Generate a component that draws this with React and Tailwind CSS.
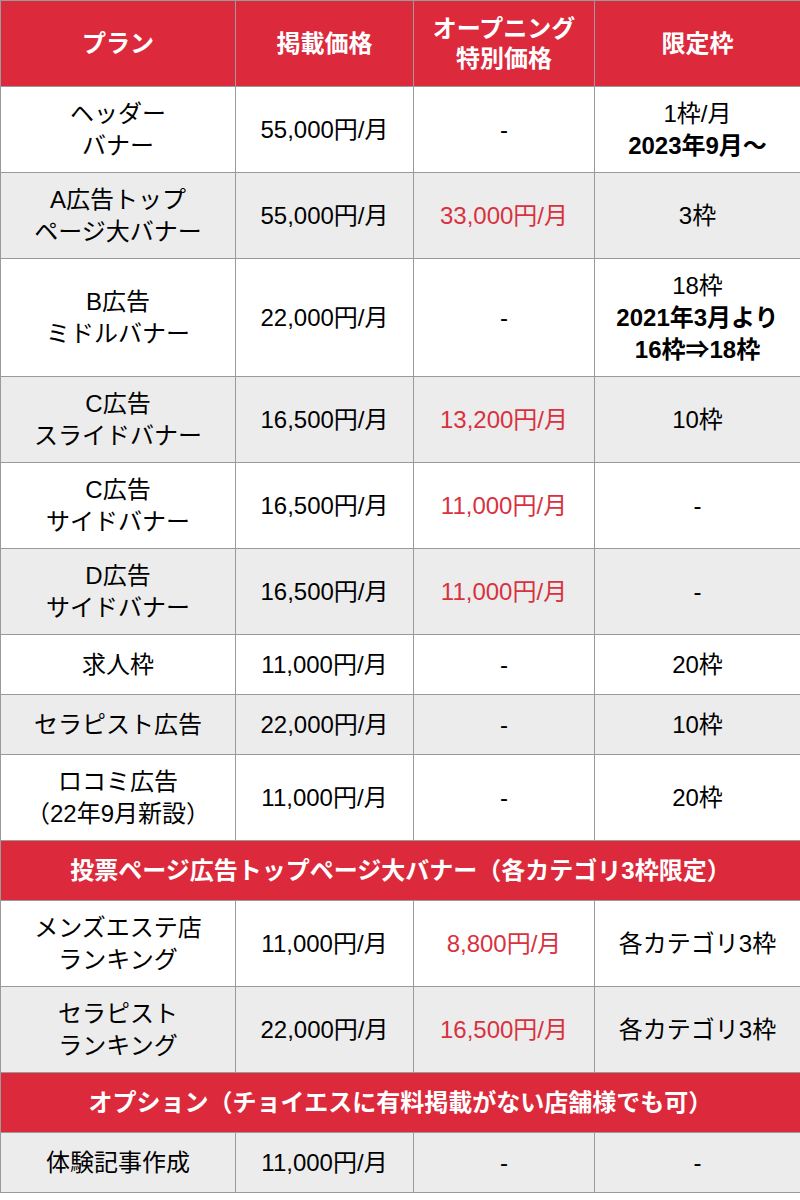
import React from 'react'

const rows = [
  { plan: ['ヘッダー', 'バナー'], price: '55,000円/月', open: '-', limit: [['1枠/月', false], ['2023年9月〜', true]] },
  { plan: ['A広告トップ', 'ページ大バナー'], price: '55,000円/月', open: '33,000円/月', limit: [['3枠', false]] },
  { plan: ['B広告', 'ミドルバナー'], price: '22,000円/月', open: '-', limit: [['18枠', false], ['2021年3月より', true], ['16枠⇒18枠', true]] },
  { plan: ['C広告', 'スライドバナー'], price: '16,500円/月', open: '13,200円/月', limit: [['10枠', false]] },
  { plan: ['C広告', 'サイドバナー'], price: '16,500円/月', open: '11,000円/月', limit: [['-', false]] },
  { plan: ['D広告', 'サイドバナー'], price: '16,500円/月', open: '11,000円/月', limit: [['-', false]] },
  { plan: ['求人枠'], price: '11,000円/月', open: '-', limit: [['20枠', false]] },
  { plan: ['セラピスト広告'], price: '22,000円/月', open: '-', limit: [['10枠', false]] },
  { plan: ['ロコミ広告', '（22年9月新設）'], price: '11,000円/月', open: '-', limit: [['20枠', false]] },
]

const vote = [
  { plan: ['メンズエステ店', 'ランキング'], price: '11,000円/月', open: '8,800円/月', limit: [['各カテゴリ3枠', false]] },
  { plan: ['セラピスト', 'ランキング'], price: '22,000円/月', open: '16,500円/月', limit: [['各カテゴリ3枠', false]] },
]

const options = [
  { plan: ['体験記事作成'], price: '11,000円/月', open: '-', limit: [['-', false]] },
]

const cell = 'border border-[#9a9a9a] text-center align-middle px-1 py-[10.5px] leading-[32px] h-[60px]'

const Row = ({ r, gray }) => (
  <tr className={gray ? 'bg-[#ececec]' : 'bg-white'}>
    <td className={cell}>
      {r.plan.map((l, i) => <div key={i}>{l}</div>)}
    </td>
    <td className={cell}>{r.price}</td>
    <td className={`${cell} ${r.open !== '-' ? 'text-[#d8323f]' : ''}`}>{r.open}</td>
    <td className={cell}>
      {r.limit.map(([l, b], i) => <div key={i} className={b ? 'font-bold' : ''}>{l}</div>)}
    </td>
  </tr>
)

const Section = ({ children }) => (
  <tr className="bg-[#dc2a3c]">
    <td colSpan={4} className="border border-[#9a9a9a] text-center text-white font-bold h-[60px] leading-[32px] whitespace-nowrap">
      {children}
    </td>
  </tr>
)

export default function App() {
  return (
    <div className="w-[800px] bg-white text-black text-[24px]" style={{ fontFamily: '"Liberation Sans", "Noto Sans CJK JP", sans-serif' }}>
      <table className="w-[800px] border-collapse table-fixed">
        <colgroup>
          <col className="w-[235px]" />
          <col className="w-[178px]" />
          <col className="w-[181px]" />
          <col className="w-[206px]" />
        </colgroup>
        <thead>
          <tr className="bg-[#dc2a3c] text-white font-bold h-[86px]">
            <th className="border border-[#9a9a9a] leading-[30px]">プラン</th>
            <th className="border border-[#9a9a9a] leading-[30px]">掲載価格</th>
            <th className="border border-[#9a9a9a] leading-[30px]">
              <div>オープニング</div>
              <div>特別価格</div>
            </th>
            <th className="border border-[#9a9a9a] leading-[30px]">限定枠</th>
          </tr>
        </thead>
        <tbody>
          {rows.map((r, i) => <Row key={i} r={r} gray={i % 2 === 1} />)}
          <Section>投票ページ広告トップページ大バナー（各カテゴリ3枠限定）</Section>
          {vote.map((r, i) => <Row key={i} r={r} gray={i % 2 === 1} />)}
          <Section>オプション（チョイエスに有料掲載がない店舗様でも可）</Section>
          {options.map((r, i) => <Row key={i} r={r} gray={true} />)}
        </tbody>
      </table>
    </div>
  )
}
